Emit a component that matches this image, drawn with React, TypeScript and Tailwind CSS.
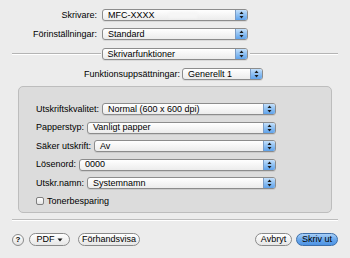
import React from "react";

const font = { fontFamily: '"Liberation Sans", Arial, sans-serif' };

function Arrows() {
  return (
    <svg width="5" height="8" viewBox="0 0 5 8">
      <path d="M2.5 0.5 L4.5 3 L0.5 3 Z" fill="#1a1a1a" />
      <path d="M2.5 7.5 L4.5 5 L0.5 5 Z" fill="#1a1a1a" />
    </svg>
  );
}

function Popup({ text, className = "", extra }: { text: string; className?: string; extra?: React.ReactNode }) {
  return (
    <div
      className={`flex h-[12px] items-stretch rounded-[3px] border border-[#8c8c8c] bg-gradient-to-b from-white to-[#ececec] shadow-[0_1px_0_rgba(0,0,0,0.08)] ${className}`}
    >
      <div className="flex min-w-0 flex-1 items-center pl-[5px] text-[9px] leading-none text-black">
        <span className="whitespace-nowrap">{text}</span>
        {extra}
      </div>
      <div className="flex w-[12px] items-center justify-center rounded-r-[2px] border-l border-[#7a9cc6] bg-gradient-to-b from-[#c4e0fb] via-[#8ec0f2] to-[#5fa3ec]">
        <Arrows />
      </div>
    </div>
  );
}

function Button({ text, className = "", blue = false }: { text: React.ReactNode; className?: string; blue?: boolean }) {
  return (
    <div
      className={`flex h-[13px] items-center justify-center rounded-full border text-[9px] leading-none ${
        blue
          ? "border-[#3d6ea8] bg-gradient-to-b from-[#a9d0f8] via-[#6aa8ec] to-[#4d93e4] text-black"
          : "border-[#8a8a8a] bg-gradient-to-b from-white to-[#e6e6e6] text-black"
      } ${className}`}
    >
      {text}
    </div>
  );
}

export default function App() {
  return (
    <div className="flex h-[258px] w-[350px] flex-col bg-[#ececec] pt-[9px] text-black" style={font}>
      {/* Skrivare */}
      <div className="flex h-[12px] items-center">
        <div className="w-[97px] text-right text-[9px] leading-none">Skrivare:</div>
        <Popup
          text="MFC-XXXX"
          className="ml-[5px] w-[146px]"
          extra={<span className="ml-[14px] h-[6px] w-[28px] bg-[#f6f6f6] blur-[1px]" />}
        />
      </div>
      {/* Förinställningar */}
      <div className="mt-[7px] flex h-[12px] items-center">
        <div className="w-[97px] text-right text-[9px] leading-none">Förinställningar:</div>
        <Popup text="Standard" className="ml-[5px] w-[146px]" />
      </div>
      {/* separator with popup */}
      <div className="mt-[8px] flex h-[12px] items-center px-[12px]">
        <div className="h-[2px] flex-1 border-t border-[#b4b4b4] border-b border-b-white" />
        <Popup text="Skrivarfunktioner" className="ml-[1px] mr-[2px] w-[146px]" />
        <div className="h-[2px] flex-1 border-t border-[#b4b4b4] border-b border-b-white" />
      </div>
      {/* Funktionsuppsättningar */}
      <div className="mt-[8px] flex h-[12px] items-center">
        <div className="w-[180px] text-right text-[9px] leading-none">Funktionsuppsättningar:</div>
        <Popup text="Generellt 1" className="ml-[2px] w-[81px]" />
      </div>

      {/* panel */}
      <div className="mx-[18px] mt-[6px] flex h-[127px] flex-col rounded-[5px] border border-[#bdbdbd] bg-[#dcdcdc] pl-[17px] pt-[16px]">
        <div className="flex w-[240px] flex-col gap-[6.5px]">
          {[
            ["Utskriftskvalitet:", "Normal (600 x 600 dpi)"],
            ["Papperstyp:", "Vanligt papper"],
            ["Säker utskrift:", "Av"],
            ["Lösenord:", "0000"],
            ["Utskr.namn:", "Systemnamn"],
          ].map(([l, v]) => (
            <div key={l} className="flex h-[12px] items-center">
              <span className="whitespace-nowrap text-[9px] leading-none">{l}</span>
              <Popup text={v} className="ml-[3px] flex-1" />
            </div>
          ))}
        </div>
        <div className="mt-[7px] flex h-[10px] items-center">
          <div className="h-[8px] w-[8px] rounded-[2px] border border-[#7f7f7f] bg-gradient-to-b from-white to-[#e4e4e4]" />
          <span className="ml-[3px] text-[9px] leading-none">Tonerbesparing</span>
        </div>
      </div>

      {/* bottom separator */}
      <div className="mx-[12px] mt-[6px] h-[2px] border-t border-[#bcbcbc] border-b border-b-white" />

      {/* buttons */}
      <div className="mt-[12px] flex items-center px-[12px]">
        <div className="flex h-[12px] w-[12px] items-center justify-center rounded-full border border-[#8a8a8a] bg-gradient-to-b from-white to-[#e2e2e2] text-[8px] font-bold leading-none">
          ?
        </div>
        <Button
          className="ml-[5px] w-[41px]"
          text={
            <span className="flex items-center">
              PDF
              <svg width="6" height="4" viewBox="0 0 6 4" className="ml-[2px]">
                <path d="M0.5 0.5 L5.5 0.5 L3 3.5 Z" fill="#1a1a1a" />
              </svg>
            </span>
          }
        />
        <Button className="ml-[8px] w-[62px]" text="Förhandsvisa" />
        <div className="flex-1" />
        <Button className="w-[37px]" text="Avbryt" />
        <Button blue className="ml-[4px] w-[42px]" text="Skriv ut" />
      </div>
    </div>
  );
}
